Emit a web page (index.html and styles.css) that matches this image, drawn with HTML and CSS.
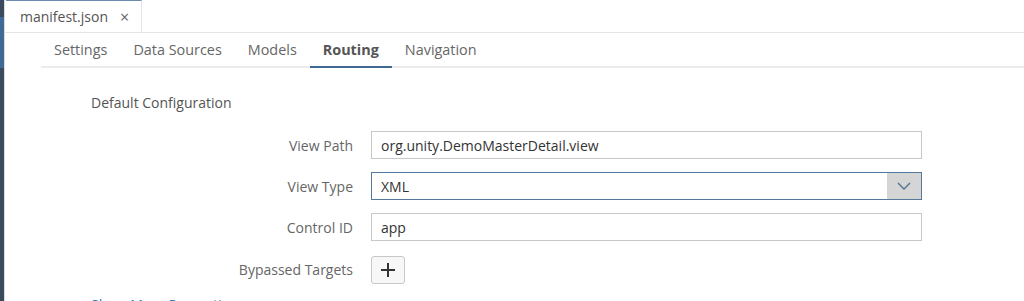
FILE: index.html
```html
<!DOCTYPE html>
<html lang="en">
<head>
    <meta charset="UTF-8">
    <title>manifest.json</title>
    <link rel="stylesheet" href="styles.css">
</head>
<body>
    <div class="sidebar">
        <div class="sidebar-active"></div>
    </div>

    <div class="main">
        <div class="tabstrip">
            <div class="file-tab">
                <span class="file-name">manifest.json</span>
                <span class="file-close">&times;</span>
            </div>
        </div>

        <div class="subtabs">
            <div class="subtab">Settings</div>
            <div class="subtab">Data Sources</div>
            <div class="subtab">Models</div>
            <div class="subtab selected">Routing</div>
            <div class="subtab">Navigation</div>
        </div>

        <div class="content">
            <div class="section-title">Default Configuration</div>

            <div class="form">
                <label class="form-label">View Path</label>
                <div class="input">org.unity.DemoMasterDetail.view</div>

                <label class="form-label">View Type</label>
                <div class="input select">
                    <span class="select-value">XML</span>
                    <span class="select-arrow">
                        <svg width="14" height="8" viewBox="0 0 14 8"><path d="M1 1 L7 7 L13 1" fill="none" stroke="#4f6f8c" stroke-width="1.3"/></svg>
                    </span>
                </div>

                <label class="form-label">Control ID</label>
                <div class="input">app</div>

                <label class="form-label">Bypassed Targets</label>
                <div>
                    <button class="add-btn">
                        <svg width="16" height="16" viewBox="0 0 16 16"><path d="M8 1 V15 M1 8 H15" stroke="#333" stroke-width="2"/></svg>
                    </button>
                </div>
            </div>

            <div class="more-link">Show More Properties</div>
        </div>
    </div>
</body>
</html>
```

FILE: styles.css
```css
body {
    margin: 0;
    height: 301px;
    overflow: hidden;
    display: flex;
    font-family: "Open Sans", "Liberation Sans", sans-serif;
    font-size: 14px;
    color: #333;
    background: #fff;
}
.sidebar {
    width: 4px;
    background: #3b4a5c;
    flex-shrink: 0;
}
.sidebar-active {
    margin-top: 17px;
    height: 51px;
    background: #3e6a95;
}
.main {
    flex: 1;
    border-left: 1px solid #dcdcdc;
}
.tabstrip {
    height: 32px;
    border-bottom: 1px solid #e4e4e8;
    display: flex;
    padding-left: 1px;
}
.file-tab {
    display: flex;
    align-items: center;
    gap: 12px;
    padding: 0 12px 0 14px;
    border-top: 1px solid #6a8db0;
    border-right: 1px solid #e4e4e8;
    color: #555;
    font-size: 14px;
}
.file-close {
    color: #666;
    font-size: 16px;
}
.subtabs {
    display: flex;
    margin-left: 36px;
    height: 33px;
    border-bottom: 2px solid #ebebeb;
}
.subtab {
    padding: 0 13px;
    display: flex;
    align-items: center;
    color: #666;
    font-size: 14.4px;
    margin-bottom: -2px;
    border-bottom: 2px solid transparent;
}
.subtab.selected {
    font-weight: bold;
    color: #555;
    border-bottom-color: #3f6a93;
}
.content {
    padding: 25px 0 0 86px;
}
.section-title {
    color: #555;
    font-size: 14px;
}
.form {
    display: grid;
    grid-template-columns: 262px 551px;
    column-gap: 18px;
    row-gap: 13px;
    margin-top: 19px;
    align-items: center;
}
.form-label {
    text-align: right;
    color: #666;
}
.input {
    height: 26px;
    border: 1px solid #c8c8c8;
    display: flex;
    align-items: center;
    padding-left: 9px;
    color: #333;
}
.select {
    border-color: #55799d;
    padding-right: 0;
}
.select-value {
    flex: 1;
}
.select-arrow {
    width: 34px;
    height: 26px;
    background: #d5d5d5;
    display: flex;
    align-items: center;
    justify-content: center;
}
.add-btn {
    width: 34px;
    height: 28px;
    margin-top: 2px;
    border: 1px solid #c8c8c8;
    border-radius: 3px;
    background: #f7f7f7;
    display: flex;
    align-items: center;
    justify-content: center;
    padding: 0;
}
.more-link {
    margin-top: 11px;
    color: #2a7dc7;
}
```
